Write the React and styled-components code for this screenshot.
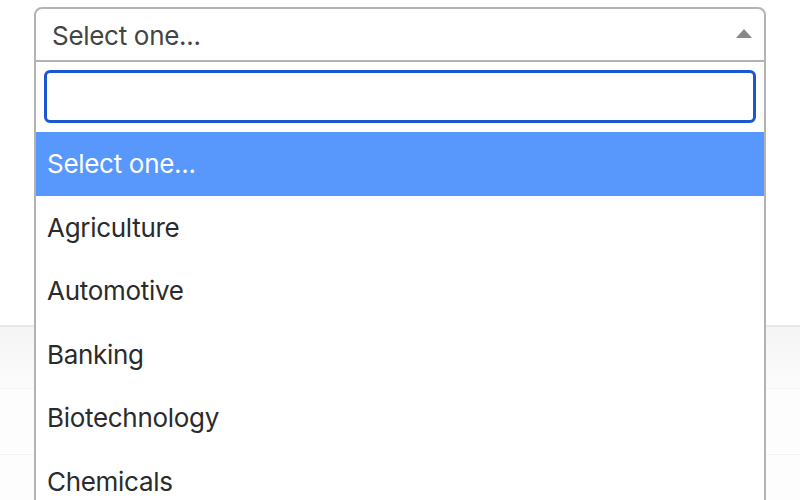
import React from "react";
import styled, { createGlobalStyle } from "styled-components";

const Global = createGlobalStyle`
  html, body { margin: 0; padding: 0; background: #fff; }
  body { font-family: Inter, "Noto Sans", sans-serif; overflow: hidden; }
  * { box-sizing: border-box; }
`;

const Page = styled.div`
  position: relative;
  width: 800px;
  height: 500px;
  overflow: hidden;
  background: #fff;
`;

const TopArea = styled.div`
  height: 325px;
`;

const Table = styled.div`
  border-top: 2px solid #e8e8e8;
  display: flex;
  flex-direction: column;
`;

const Row = styled.div`
  height: ${(p) => p.$h}px;
  border-bottom: 1px solid #f4f4f4;
  background: ${(p) => p.$bg};
  display: grid;
  grid-template-columns: 30px 1fr 30px;
`;

const Cell = styled.div`
  border-right: ${(p) => (p.$line ? "1px solid #f6f6f6" : "none")};
`;

const SelectWrap = styled.div`
  position: absolute;
  top: 7px;
  left: 34px;
  width: 732px;
`;

const Selection = styled.div`
  height: 55px;
  border: 2px solid #b3b3b3;
  border-radius: 8px 8px 0 0;
  background: #fff;
  display: flex;
  align-items: center;
  justify-content: space-between;
  padding: 0 12px 0 16px;
`;

const Rendered = styled.span`
  font-size: 26px;
  color: #444;
  letter-spacing: -0.3px;
  margin-top: 2px;
`;

const Arrow = styled.span`
  width: 0;
  height: 0;
  border-left: 8px solid transparent;
  border-right: 8px solid transparent;
  border-bottom: 9px solid #888;
  margin-top: -2px;
`;

const Dropdown = styled.div`
  position: absolute;
  top: 53px;
  left: 0;
  width: 732px;
  border: 2px solid #b3b3b3;
  background: #fff;
`;

const SearchBox = styled.div`
  padding: 8px 8px 9px 8px;
`;

const SearchInput = styled.div`
  height: 53px;
  border: 3px solid #1b57d1;
  border-radius: 6px;
  background: #fff;
`;

const Option = styled.div`
  height: 63.5px;
  padding: 0 11px;
  display: flex;
  align-items: center;
  font-size: 26px;
  letter-spacing: -0.3px;
  color: ${(p) => (p.$active ? "#fff" : "#2b2b2b")};
  background: ${(p) => (p.$active ? "#5897fb" : "#fff")};
`;

const options = ["Select one...", "Agriculture", "Automotive", "Banking", "Biotechnology", "Chemicals"];

export default function App() {
  return (
    <Page>
      <Global />
      <TopArea />
      <Table>
        <Row $h={62} $bg="linear-gradient(#f5f5f5, #fbfbfb)">
          <Cell /><Cell /><Cell />
        </Row>
        <Row $h={66} $bg="#fdfdfd">
          <Cell /><Cell /><Cell />
        </Row>
        <Row $h={66} $bg="#fdfdfd">
          <Cell /><Cell /><Cell />
        </Row>
      </Table>
      <SelectWrap>
        <Selection>
          <Rendered>Select one...</Rendered>
          <Arrow />
        </Selection>
        <Dropdown>
          <SearchBox>
            <SearchInput />
          </SearchBox>
          {options.map((o, i) => (
            <Option key={o} $active={i === 0}>{o}</Option>
          ))}
        </Dropdown>
      </SelectWrap>
    </Page>
  );
}
